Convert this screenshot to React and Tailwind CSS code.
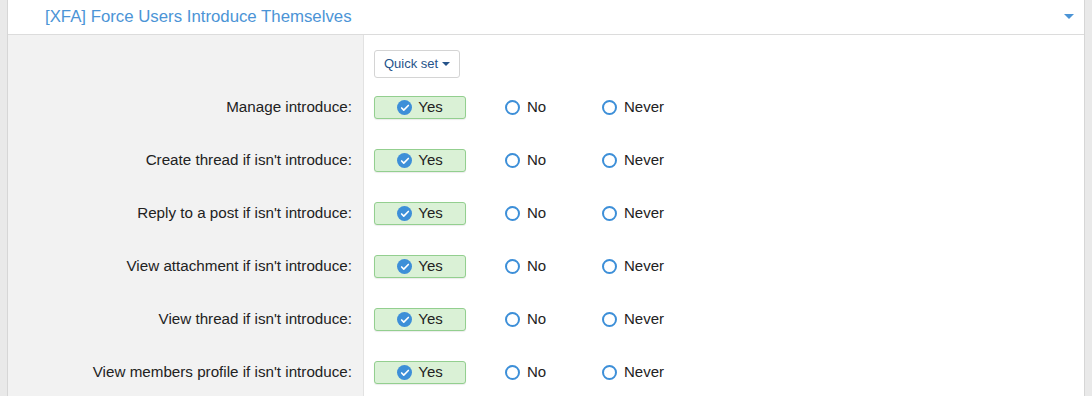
import { Check } from "lucide-react";

const rows = [
  "Manage introduce:",
  "Create thread if isn't introduce:",
  "Reply to a post if isn't introduce:",
  "View attachment if isn't introduce:",
  "View thread if isn't introduce:",
  "View members profile if isn't introduce:",
];

const Radio = ({ label }) => (
  <label className="flex items-center gap-[7px] w-[97px]">
    <span className="w-[15px] h-[15px] rounded-full border-[2.5px] border-[#3d8fd8] bg-white" />
    <span className="text-[15px] text-[#222]">{label}</span>
  </label>
);

const PermissionRow = ({ label }) => (
  <div className="flex h-[53px]">
    <div className="w-[356px] shrink-0 bg-[#f2f2f2] border-r border-[#e2e2e2] flex items-center justify-end pr-[11px] text-[15.2px] text-[#222]">
      {label}
    </div>
    <div className="flex-1 flex items-center pl-[10px]">
      <div className="w-[92px] h-[23px] rounded-[3px] border border-[#93cf8f] bg-[#daf1d6] shadow-[0_1px_1px_rgba(0,0,0,0.08)] flex items-center justify-center gap-[6px]">
        <span className="w-[15px] h-[15px] rounded-full bg-[#3d8fd8] flex items-center justify-center">
          <Check className="w-[10px] h-[10px] text-white" strokeWidth={4} />
        </span>
        <span className="text-[15px] text-[#222]">Yes</span>
      </div>
      <div className="ml-[39px] flex">
        <Radio label="No" />
        <Radio label="Never" />
      </div>
    </div>
  </div>
);

export default function App() {
  return (
    <div
      className="w-[1092px] h-[396px] overflow-hidden bg-[#e9e9e9] px-[7px]"
      style={{ fontFamily: "Helvetica, 'Liberation Sans', Arial, sans-serif" }}
    >
      <div className="h-full bg-white border-x border-[#d6d6d6]">
        {/* Header */}
        <div className="h-[35px] border-b border-[#dcdcdc] flex items-center justify-between pl-[37px] pr-[10px]">
          <span className="text-[16.8px] text-[#4b94d6]">
            [XFA] Force Users Introduce Themselves
          </span>
          <span className="w-0 h-0 border-x-[5px] border-x-transparent border-t-[5px] border-t-[#4b94d6] mb-[1px]" />
        </div>

        {/* Quick set */}
        <div className="flex">
          <div className="w-[356px] shrink-0 bg-[#f2f2f2] border-r border-[#e2e2e2]" />
          <div className="flex-1 pl-[10px] pt-[15px] pb-[3px]">
            <button className="h-[28px] px-[9px] rounded-[3px] border border-[#d4d4d4] bg-white flex items-center gap-[4px] text-[13px] text-[#25538a]">
              Quick set
              <span className="w-0 h-0 border-x-[4px] border-x-transparent border-t-[4px] border-t-[#25538a]" />
            </button>
          </div>
        </div>

        {rows.map((r) => (
          <PermissionRow key={r} label={r} />
        ))}
      </div>
    </div>
  );
}
